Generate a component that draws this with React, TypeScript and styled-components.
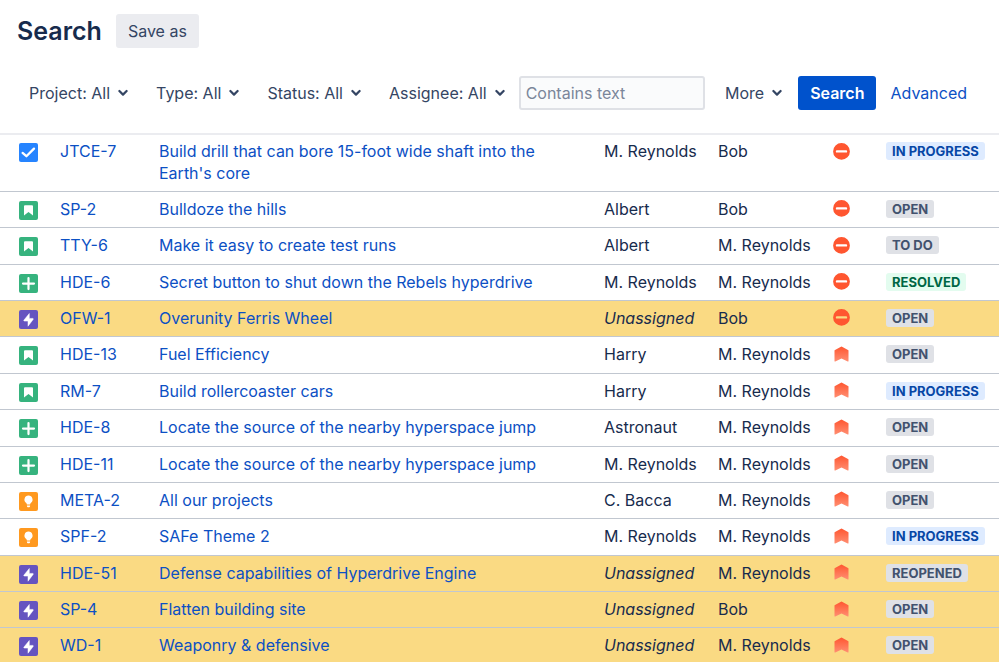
import React from 'react';
import styled, { createGlobalStyle } from 'styled-components';

const GlobalStyle = createGlobalStyle`
  *, *::before, *::after { box-sizing: border-box; }
  body {
    margin: 0;
    background: #fff;
    color: #172b4d;
    font-family: Inter, "Liberation Sans", sans-serif;
    font-size: 16px;
    line-height: 1.4;
    overflow: hidden;
  }
  button, input { font: inherit; }
`;

const Page = styled.main`
  min-height: 100vh;
`;

const Header = styled.header`
  display: flex;
  align-items: center;
  gap: 14px;
  padding: 14px 17px 0;
`;

const Title = styled.h1`
  margin: 0;
  font-size: 25px;
  font-weight: 600;
  line-height: 34px;
`;

const Button = styled.button<{ $primary?: boolean }>`
  height: 34px;
  padding: 0 12px;
  border: 0;
  border-radius: 3px;
  background: ${(p) => (p.$primary ? '#0052cc' : '#ebecf0')};
  color: ${(p) => (p.$primary ? '#fff' : '#344563')};
  font-weight: ${(p) => (p.$primary ? 600 : 400)};
  white-space: nowrap;
`;

const Filters = styled.form`
  display: flex;
  align-items: center;
  padding: 28px 32px 23px 17px;
  border-bottom: 2px solid #ebecf0;
`;

const FilterGroup = styled.div`
  display: flex;
  gap: 4px;
`;

const FilterButton = styled.button`
  display: flex;
  align-items: center;
  gap: 8px;
  height: 34px;
  padding: 0 12px;
  border: 0;
  background: none;
  color: #344563;
  white-space: nowrap;
`;

const TextInput = styled.input`
  flex: 1;
  min-width: 0;
  height: 34px;
  margin: 0 8px 0 2px;
  padding: 0 5px;
  border: 2px solid #dfe1e6;
  border-radius: 3px;
  background: #fafbfc;
  color: #172b4d;
  &::placeholder { color: #7a869a; opacity: 1; }
`;

const Link = styled.a`
  color: #0c50c4;
  text-decoration: none;
`;

const SearchButton = styled(Button)`
  margin-left: 4px;
`;

const AdvancedLink = styled(Link)`
  margin-left: 14px;
`;

const Table = styled.table`
  width: 100%;
  table-layout: fixed;
  border-collapse: separate;
  border-spacing: 0;
`;

const Col = styled.col<{ $width?: number }>`
  width: ${(p) => (p.$width ? `${p.$width}px` : 'auto')};
`;

const Cell = styled.td`
  padding: 6px 0 7px 10px;
  border-bottom: 1px solid #c1c7d0;
  vertical-align: top;
  white-space: nowrap;
`;

const Row = styled.tr<{ $highlight: boolean }>`
  background: ${(p) => (p.$highlight ? '#fada83' : '#fff')};
  &:first-child ${Cell} {
    padding-top: 5px;
    padding-bottom: 6px;
  }
`;

const TypeCell = styled(Cell)`
  padding-left: 19px;
`;

const SummaryCell = styled(Cell)`
  padding-right: 24px;
  white-space: normal;
`;

const IconBox = styled.span<{ $low?: boolean }>`
  display: flex;
  align-items: ${(p) => (p.$low ? 'flex-end' : 'center')};
  height: 22px;
`;

type Tone = 'blue' | 'gray' | 'green';

const tones: Record<Tone, { bg: string; fg: string }> = {
  blue: { bg: '#deebff', fg: '#0747a6' },
  gray: { bg: '#dfe1e6', fg: '#42526e' },
  green: { bg: '#e3fcef', fg: '#006644' },
};

const Lozenge = styled.span<{ $tone: Tone }>`
  padding: 0 6px;
  border-radius: 3px;
  background: ${(p) => tones[p.$tone].bg};
  color: ${(p) => tones[p.$tone].fg};
  font-size: 13px;
  font-weight: 700;
  line-height: 18px;
`;

type IssueType = 'task' | 'story' | 'feature' | 'epic' | 'idea';

const typeColors: Record<IssueType, string> = {
  task: '#2684ff',
  story: '#36b37e',
  feature: '#36b37e',
  epic: '#6554c0',
  idea: '#ff991f',
};

const TypeIcon = ({ type }: { type: IssueType }) => (
  <svg width="19" height="19" viewBox="0 0 19 19" role="img" aria-label={type}>
    <rect width="19" height="19" rx="2" fill={typeColors[type]} />
    {type === 'task' && (
      <path d="M3.600 9.900 7.400 13.200 15 5.600" fill="none" stroke="#fff" strokeWidth="2.300" strokeLinecap="round" strokeLinejoin="round" />
    )}
    {type === 'story' && (
      <path d="M6 4.300h7a1 1 0 0 1 1 1v9.200L9.500 11 5 14.500V5.300a1 1 0 0 1 1-1z" fill="#fff" />
    )}
    {type === 'feature' && (
      <path d="M9.500 4.100v11M4 9.600h11" fill="none" stroke="#fff" strokeWidth="2.200" strokeLinecap="round" />
    )}
    {type === 'epic' && (
      <path d="M10.300 3.500v4.900h3.300c.7 0 .9.500.5 1.100L9 16.200v-5.100H5.500c-.7 0-.9-.5-.5-1.100z" fill="#fff" stroke="#fff" strokeWidth=".5" strokeLinejoin="round" />
    )}
    {type === 'idea' && (
      <path d="M9.500 3.600a4 4 0 0 1 2.300 7.300c-.5.400-.7.900-.7 1.500H7.900c0-.6-.2-1.100-.7-1.500A4 4 0 0 1 9.500 3.600zM7.900 13.400h3.200c0 1.400-.6 1.900-1.600 1.900s-1.600-.5-1.600-1.900z" fill="#fff" />
    )}
  </svg>
);

type Priority = 'blocker' | 'high';

const PriorityIcon = ({ priority }: { priority: Priority }) =>
  priority === 'blocker' ? (
    <svg width="17" height="17" viewBox="0 0 17 17" role="img" aria-label="Blocker">
      <path
        d="M8.500 0a8.400 8.400 0 1 1 0 16.800 8.400 8.400 0 0 1 0-16.800zM4 7.200a1.200 1.200 0 0 0 0 2.400h9a1.200 1.200 0 0 0 0-2.400z"
        fill="#ff5630"
        fillRule="evenodd"
      />
    </svg>
  ) : (
    <svg width="17" height="17" viewBox="0 0 17 17" role="img" aria-label="High">
      <defs>
        <linearGradient id="highPriority" x1="0" y1="0" x2="0" y2="1">
          <stop offset="0" stopColor="#ff5630" />
          <stop offset="1" stopColor="#ff8f73" />
        </linearGradient>
      </defs>
      <path d="M8 .7q.5-.3 1 0l6 3.300q.5.300.5.800v10.200q0 .9-.8.500L8.500 12.400l-6.200 3.100q-.8.400-.8-.5V4.800q0-.5.5-.8z" fill="url(#highPriority)" />
    </svg>
  );

const Chevron = () => (
  <svg width="10" height="8" viewBox="0 0 10 8" aria-hidden="true">
    <path d="M1.400 2 5 5.600 8.600 2" fill="none" stroke="#344563" strokeWidth="2.200" strokeLinecap="round" strokeLinejoin="round" />
  </svg>
);

interface Issue {
  type: IssueType;
  id: string;
  summary: string;
  assignee?: string;
  reporter: string;
  priority: Priority;
  status: string;
}

const issues: Issue[] = [
  { type: 'task', id: 'JTCE-7', summary: "Build drill that can bore 15-foot wide shaft into the Earth's core", assignee: 'M. Reynolds', reporter: 'Bob', priority: 'blocker', status: 'IN PROGRESS' },
  { type: 'story', id: 'SP-2', summary: 'Bulldoze the hills', assignee: 'Albert', reporter: 'Bob', priority: 'blocker', status: 'OPEN' },
  { type: 'story', id: 'TTY-6', summary: 'Make it easy to create test runs', assignee: 'Albert', reporter: 'M. Reynolds', priority: 'blocker', status: 'TO DO' },
  { type: 'feature', id: 'HDE-6', summary: 'Secret button to shut down the Rebels hyperdrive', assignee: 'M. Reynolds', reporter: 'M. Reynolds', priority: 'blocker', status: 'RESOLVED' },
  { type: 'epic', id: 'OFW-1', summary: 'Overunity Ferris Wheel', reporter: 'Bob', priority: 'blocker', status: 'OPEN' },
  { type: 'story', id: 'HDE-13', summary: 'Fuel Efficiency', assignee: 'Harry', reporter: 'M. Reynolds', priority: 'high', status: 'OPEN' },
  { type: 'story', id: 'RM-7', summary: 'Build rollercoaster cars', assignee: 'Harry', reporter: 'M. Reynolds', priority: 'high', status: 'IN PROGRESS' },
  { type: 'feature', id: 'HDE-8', summary: 'Locate the source of the nearby hyperspace jump', assignee: 'Astronaut', reporter: 'M. Reynolds', priority: 'high', status: 'OPEN' },
  { type: 'feature', id: 'HDE-11', summary: 'Locate the source of the nearby hyperspace jump', assignee: 'M. Reynolds', reporter: 'M. Reynolds', priority: 'high', status: 'OPEN' },
  { type: 'idea', id: 'META-2', summary: 'All our projects', assignee: 'C. Bacca', reporter: 'M. Reynolds', priority: 'high', status: 'OPEN' },
  { type: 'idea', id: 'SPF-2', summary: 'SAFe Theme 2', assignee: 'M. Reynolds', reporter: 'M. Reynolds', priority: 'high', status: 'IN PROGRESS' },
  { type: 'epic', id: 'HDE-51', summary: 'Defense capabilities of Hyperdrive Engine', reporter: 'M. Reynolds', priority: 'high', status: 'REOPENED' },
  { type: 'epic', id: 'SP-4', summary: 'Flatten building site', reporter: 'Bob', priority: 'high', status: 'OPEN' },
  { type: 'epic', id: 'WD-1', summary: 'Weaponry & defensive', reporter: 'M. Reynolds', priority: 'high', status: 'OPEN' },
];

const statusTone = (status: string): Tone =>
  status === 'IN PROGRESS' ? 'blue' : status === 'RESOLVED' ? 'green' : 'gray';

const filters = ['Project: All', 'Type: All', 'Status: All', 'Assignee: All'];

export default function App() {
  return (
    <>
      <GlobalStyle />
      <Page>
        <Header>
          <Title>Search</Title>
          <Button type="button">Save as</Button>
        </Header>
        <Filters onSubmit={(e: React.FormEvent) => e.preventDefault()}>
          <FilterGroup>
            {filters.map((label) => (
              <FilterButton type="button" key={label}>
                {label}
                <Chevron />
              </FilterButton>
            ))}
          </FilterGroup>
          <TextInput type="text" placeholder="Contains text" aria-label="Contains text" />
          <FilterButton type="button">
            More
            <Chevron />
          </FilterButton>
          <SearchButton $primary type="submit">Search</SearchButton>
          <AdvancedLink href="#advanced">Advanced</AdvancedLink>
        </Filters>
        <Table>
          <colgroup>
            <Col $width={50} />
            <Col $width={99} />
            <Col />
            <Col $width={114} />
            <Col $width={115} />
            <Col $width={53} />
            <Col $width={123} />
          </colgroup>
          <tbody>
            {issues.map((issue) => (
              <Row key={issue.id} $highlight={!issue.assignee}>
                <TypeCell>
                  <IconBox $low><TypeIcon type={issue.type} /></IconBox>
                </TypeCell>
                <Cell><Link href={`#${issue.id}`}>{issue.id}</Link></Cell>
                <SummaryCell><Link href={`#${issue.id}`}>{issue.summary}</Link></SummaryCell>
                <Cell>{issue.assignee ?? <em>Unassigned</em>}</Cell>
                <Cell>{issue.reporter}</Cell>
                <Cell><IconBox><PriorityIcon priority={issue.priority} /></IconBox></Cell>
                <Cell>
                  <IconBox>
                    <Lozenge $tone={statusTone(issue.status)}>{issue.status}</Lozenge>
                  </IconBox>
                </Cell>
              </Row>
            ))}
          </tbody>
        </Table>
      </Page>
    </>
  );
}
